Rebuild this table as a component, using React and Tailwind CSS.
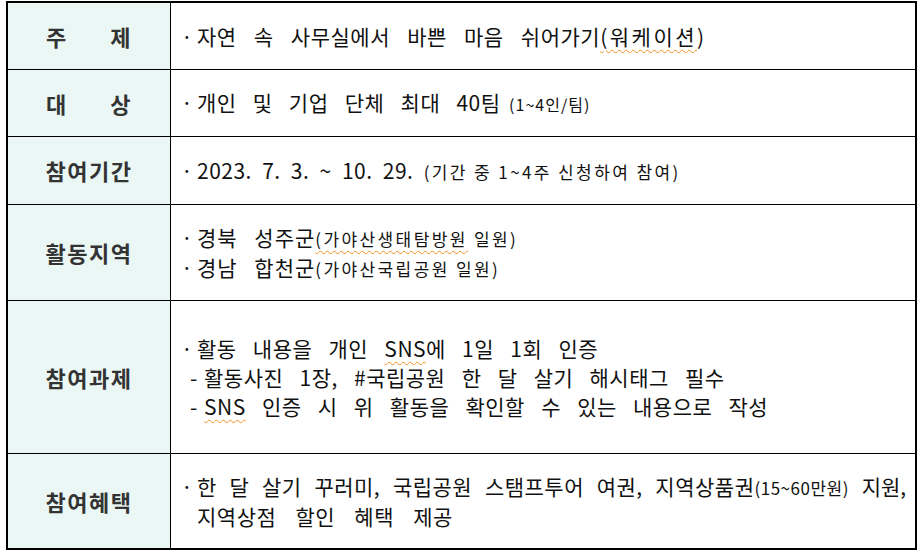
import React from 'react';

const sq = 'underline decoration-wavy decoration-[#f0901e] decoration-1 underline-offset-[4px]';

const Head = ({ children }) => (
     <div className="bg-[#eaf7f4] border-r-[1.5px] border-black flex items-center justify-center text-[22px] font-bold text-[#333] tracking-[1.5px]">
          {children}
     </div>
);

const Bullet = ({ children, className = '' }) => (
     <div className={`flex ${className}`}>
          <span className="w-[16px] shrink-0">·</span>
          <span>{children}</span>
     </div>
);

const Dash = ({ children }) => (
     <div className="flex pl-[9px]">
          <span className="w-[14px] shrink-0">-</span>
          <span>{children}</span>
     </div>
);

const note = 'text-[17px] tracking-[2.4px] [word-spacing:0px]';

const rows = [
     {
          h: 'h-[67px]',
          head: (
               <div className="flex justify-between w-[86px]">
                    <span>주</span>
                    <span>제</span>
               </div>
          ),
          body: (
               <Bullet className="[word-spacing:12px]">
                    자연 속 사무실에서 바쁜 마음 쉬어가기<span className="tracking-[2.5px]"><span className={sq}>(워케이션</span>)</span>
               </Bullet>
          )
     },
     {
          h: 'h-[67px]',
          head: (
               <div className="flex justify-between w-[86px]">
                    <span>대</span>
                    <span>상</span>
               </div>
          ),
          body: (
               <Bullet>
                    개인 및 기업 단체 최대 40팀<span className="text-[16px] tracking-[1px] [word-spacing:4px]"> (1~4인/팀)</span>
               </Bullet>
          )
     },
     {
          h: 'h-[68px]',
          head: '참여기간',
          body: (
               <Bullet className="[word-spacing:5px]">
                    2023. 7. 3. ~ 10. 29. <span className={note}>(기간 중 1~4주 신청하여 참여)</span>
               </Bullet>
          )
     },
     {
          h: 'h-[96px]',
          head: '활동지역',
          body: (
               <>
                    <Bullet className="tracking-[1px]">
                         경북 성주군<span className={note}><span className={sq}>(가야산생태탐방원</span> 일원)</span>
                    </Bullet>
                    <Bullet className="tracking-[1px]">
                         경남 합천군<span className={note}>(가야산국립공원 일원)</span>
                    </Bullet>
               </>
          )
     },
     {
          h: 'h-[153px]',
          head: '참여과제',
          body: (
               <>
                    <Bullet>
                         활동 내용을 개인 <span className={sq}>SNS</span>에 1일 1회 인증
                    </Bullet>
                    <Dash>활동사진 1장, #국립공원 한 달 살기 해시태그 필수</Dash>
                    <Dash>
                         <span className={sq}>SNS</span> 인증 시 위 활동을 확인할 수 있는 내용으로 작성
                    </Dash>
               </>
          )
     },
     {
          h: 'h-[94px]',
          last: true,
          head: '참여혜택',
          body: (
               <Bullet>
                    <span className="[word-spacing:7.5px]">
                         한 달 살기 꾸러미, 국립공원 스탬프투어 여권, 지역상품권<span className="text-[17px] tracking-[0.5px]">(15~60만원)</span> <span className="tracking-[0px]">지원,</span>
                    </span>
                    <br />
                    <span className="[word-spacing:14px]">지역상점 할인 혜택 제공</span>
               </Bullet>
          )
     }
];

export default function App() {
     return (
          <div className="w-[923px] h-[558px] bg-white pt-[1px] pl-[6px]" style={{ fontFamily: '"Noto Sans CJK KR", "Noto Sans", sans-serif' }}>
               <div className="w-[911px] h-[549px] border-2 border-black flex flex-col">
                    {rows.map((r, i) => (
                         <div key={i} className={`grid grid-cols-[163px_1fr] ${r.h} ${r.last ? '' : 'border-b-[1.5px] border-black'}`}>
                              <Head>{r.head}</Head>
                              <div className="flex flex-col justify-center pl-[10px] text-[21px] leading-[29px] tracking-[0.5px] [word-spacing:11px] text-[#111] whitespace-nowrap">
                                   {r.body}
                              </div>
                         </div>
                    ))}
               </div>
          </div>
     );
}
